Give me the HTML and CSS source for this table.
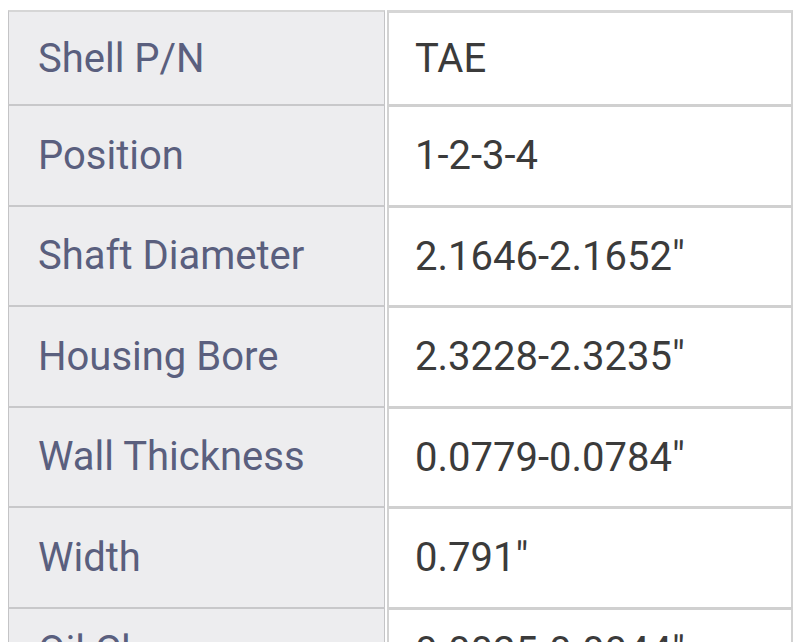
FILE: index.html
```html
<!DOCTYPE html>
<html>
<head>
<meta charset="utf-8">
<link rel="stylesheet" href="styles.css">
</head>
<body>
<div class="spec">
  <div class="row first"><div class="label">Shell P/N</div><div class="value">TAE</div></div>
  <div class="row"><div class="label">Position</div><div class="value">1-2-3-4</div></div>
  <div class="row"><div class="label">Shaft Diameter</div><div class="value">2.1646-2.1652"</div></div>
  <div class="row"><div class="label">Housing Bore</div><div class="value">2.3228-2.3235"</div></div>
  <div class="row"><div class="label">Wall Thickness</div><div class="value">0.0779-0.0784"</div></div>
  <div class="row"><div class="label">Width</div><div class="value">0.791"</div></div>
  <div class="row last"><div class="label">Oil Clearance</div><div class="value">0.0025-0.0044"</div></div>
</div>
</body>
</html>
```
FILE: styles.css
```css
html, body {
  margin: 0;
  background: #ffffff;
  overflow: hidden;
}
body {
  padding: 10px 7px 0 8px;
  font-family: Roboto, "Liberation Sans", sans-serif;
  font-size: 40px;
}
.spec {
  display: flex;
  flex-direction: column;
}
.row {
  display: grid;
  grid-template-columns: 377px 406px;
  column-gap: 2px;
  height: 100.5px;
}
.row.first {
  height: 94px;
}
.row.last {
  height: 86px;
}
.label {
  background: #ededef;
  color: #5a5f7e;
  border-left: 1px solid #c4c4c6;
  border-right: 1px solid #c4c4c6;
  border-top: 2px solid #c8c8ca;
  display: flex;
  align-items: center;
  padding-left: 29px;
}
.value {
  background: #ffffff;
  color: #3b3b3b;
  border-left: 2px solid #d2d2d2;
  border-right: 2px solid #d2d2d2;
  border-top: 3px solid #d0d0d0;
  display: flex;
  align-items: center;
  padding-left: 26px;
}
.row.first .label,
.row.first .value {
  border-top-color: #d6d6d6;
}
```
